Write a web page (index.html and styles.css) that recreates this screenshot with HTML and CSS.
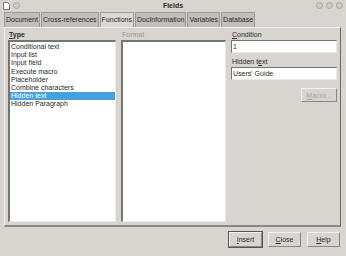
FILE: index.html
```html
<!DOCTYPE html>
<html lang="en">
<head>
    <meta charset="UTF-8">
    <title>Fields</title>
    <link rel="stylesheet" href="styles.css">
</head>
<body>
    <div class="window">
        <div class="titlebar">
            <div class="title-left">
                <svg width="7" height="8" viewBox="0 0 7 8"><path d="M0.5 0.5 H4.5 L6.5 2.5 V7.5 H0.5 Z" fill="#fff" stroke="#777"/></svg>
                <span class="dot"></span>
            </div>
            <div class="title">Fields</div>
            <div class="title-right">
                <span class="dot"></span>
                <span class="dot"></span>
                <span class="dot"></span>
            </div>
        </div>
        <div class="tabs">
            <div class="tab">Document</div>
            <div class="tab">Cross-references</div>
            <div class="tab active">Functions</div>
            <div class="tab">DocInformation</div>
            <div class="tab">Variables</div>
            <div class="tab">Database</div>
        </div>
        <div class="panel">
            <div class="col">
                <div class="label strong"><u>T</u>ype</div>
                <div class="list">
                    <div class="item">Conditional text</div>
                    <div class="item">Input list</div>
                    <div class="item">Input field</div>
                    <div class="item">Execute macro</div>
                    <div class="item">Placeholder</div>
                    <div class="item">Combine characters</div>
                    <div class="item selected">Hidden text</div>
                    <div class="item">Hidden Paragraph</div>
                </div>
            </div>
            <div class="col">
                <div class="label muted">Format</div>
                <div class="list"></div>
            </div>
            <div class="col side">
                <div class="label"><u>C</u>ondition</div>
                <div class="field">1</div>
                <div class="label">Hidden t<u>e</u>xt</div>
                <div class="field">Users' Guide</div>
                <div class="side-actions">
                    <button class="btn" disabled><u>M</u>acro...</button>
                </div>
            </div>
        </div>
        <div class="footer">
            <button class="btn default"><u>I</u>nsert</button>
            <button class="btn"><u>C</u>lose</button>
            <button class="btn"><u>H</u>elp</button>
        </div>
    </div>
</body>
</html>
```

FILE: styles.css
```css
body {
    margin: 0;
    background: #d8d4d0;
    font-family: "Liberation Sans", Arial, sans-serif;
    font-size: 7px;
    color: #2a2a2a;
}
.window {
    width: 346px;
    height: 256px;
    background: #d8d4d0;
}
.titlebar {
    height: 11px;
    display: flex;
    align-items: center;
    justify-content: space-between;
    padding: 0 3px;
    position: relative;
}
.title {
    position: absolute;
    left: 0;
    right: 0;
    text-align: center;
    font-weight: bold;
    font-size: 7px;
}
.title-left, .title-right {
    display: flex;
    align-items: center;
    gap: 3px;
}
.dot {
    width: 7px;
    height: 7px;
    border-radius: 50%;
    background: #d0ccc8;
    border: 1px solid #a8a4a0;
    box-sizing: border-box;
}
.tabs {
    display: flex;
    padding: 1px 0 0 4px;
    height: 16px;
    box-sizing: border-box;
}
.tab {
    background: #c2beba;
    border: 1px solid #9c9894;
    border-bottom: none;
    padding: 0 1px;
    line-height: 14px;
    margin-right: 1px;
}
.tab.active {
    background: #dcd8d4;
}
.panel {
    margin: 0 5px 0 4px;
    height: 200px;
    box-sizing: border-box;
    border: 1px solid #f0eeec;
    border-right: 1px solid #6c6864;
    border-bottom: 2px solid #8a8682;
    padding: 2px 3px 3px 3px;
    display: grid;
    grid-template-columns: 108px 105px 106px;
    column-gap: 5px;
}
.col {
    display: flex;
    flex-direction: column;
}
.label {
    line-height: 9px;
    height: 9px;
    padding-left: 1px;
    margin-bottom: 1px;
}
.strong {
    font-weight: bold;
}
.muted {
    color: #9a9692;
}
.list {
    flex: 1;
    background: #fff;
    border-top: 2px solid #777370;
    border-left: 2px solid #777370;
    border-right: 1px solid #ece9e6;
    border-bottom: 1px solid #ece9e6;
    padding-top: 1px;
}
.item {
    line-height: 8.2px;
    height: 8.2px;
    padding-left: 1px;
    white-space: nowrap;
}
.item.selected {
    background: #46a0dc;
    color: #fff;
}
.field {
    background: #fff;
    border-top: 1px solid #777370;
    border-left: 1px solid #777370;
    border-right: 1px solid #ece9e6;
    border-bottom: 1px solid #ece9e6;
    height: 13px;
    line-height: 12px;
    padding-left: 1px;
    margin-bottom: 4px;
    box-sizing: border-box;
}
.side-actions {
    display: flex;
    justify-content: flex-end;
    margin-top: 4px;
}
.btn {
    font-family: inherit;
    font-size: 7px;
    background: #d8d4d0;
    border: 1px solid #8a8682;
    border-top-color: #f4f2f0;
    border-left-color: #f4f2f0;
    height: 14px;
    padding: 0;
    width: 36px;
    color: #2a2a2a;
}
.btn:disabled {
    color: #a8a4a0;
}
.footer .btn {
    width: 33px;
    height: 15px;
}
.btn.default {
    outline: 1px solid #555;
}
.footer {
    display: flex;
    justify-content: flex-end;
    gap: 6px;
    padding: 5px 6px 0 0;
}
```
